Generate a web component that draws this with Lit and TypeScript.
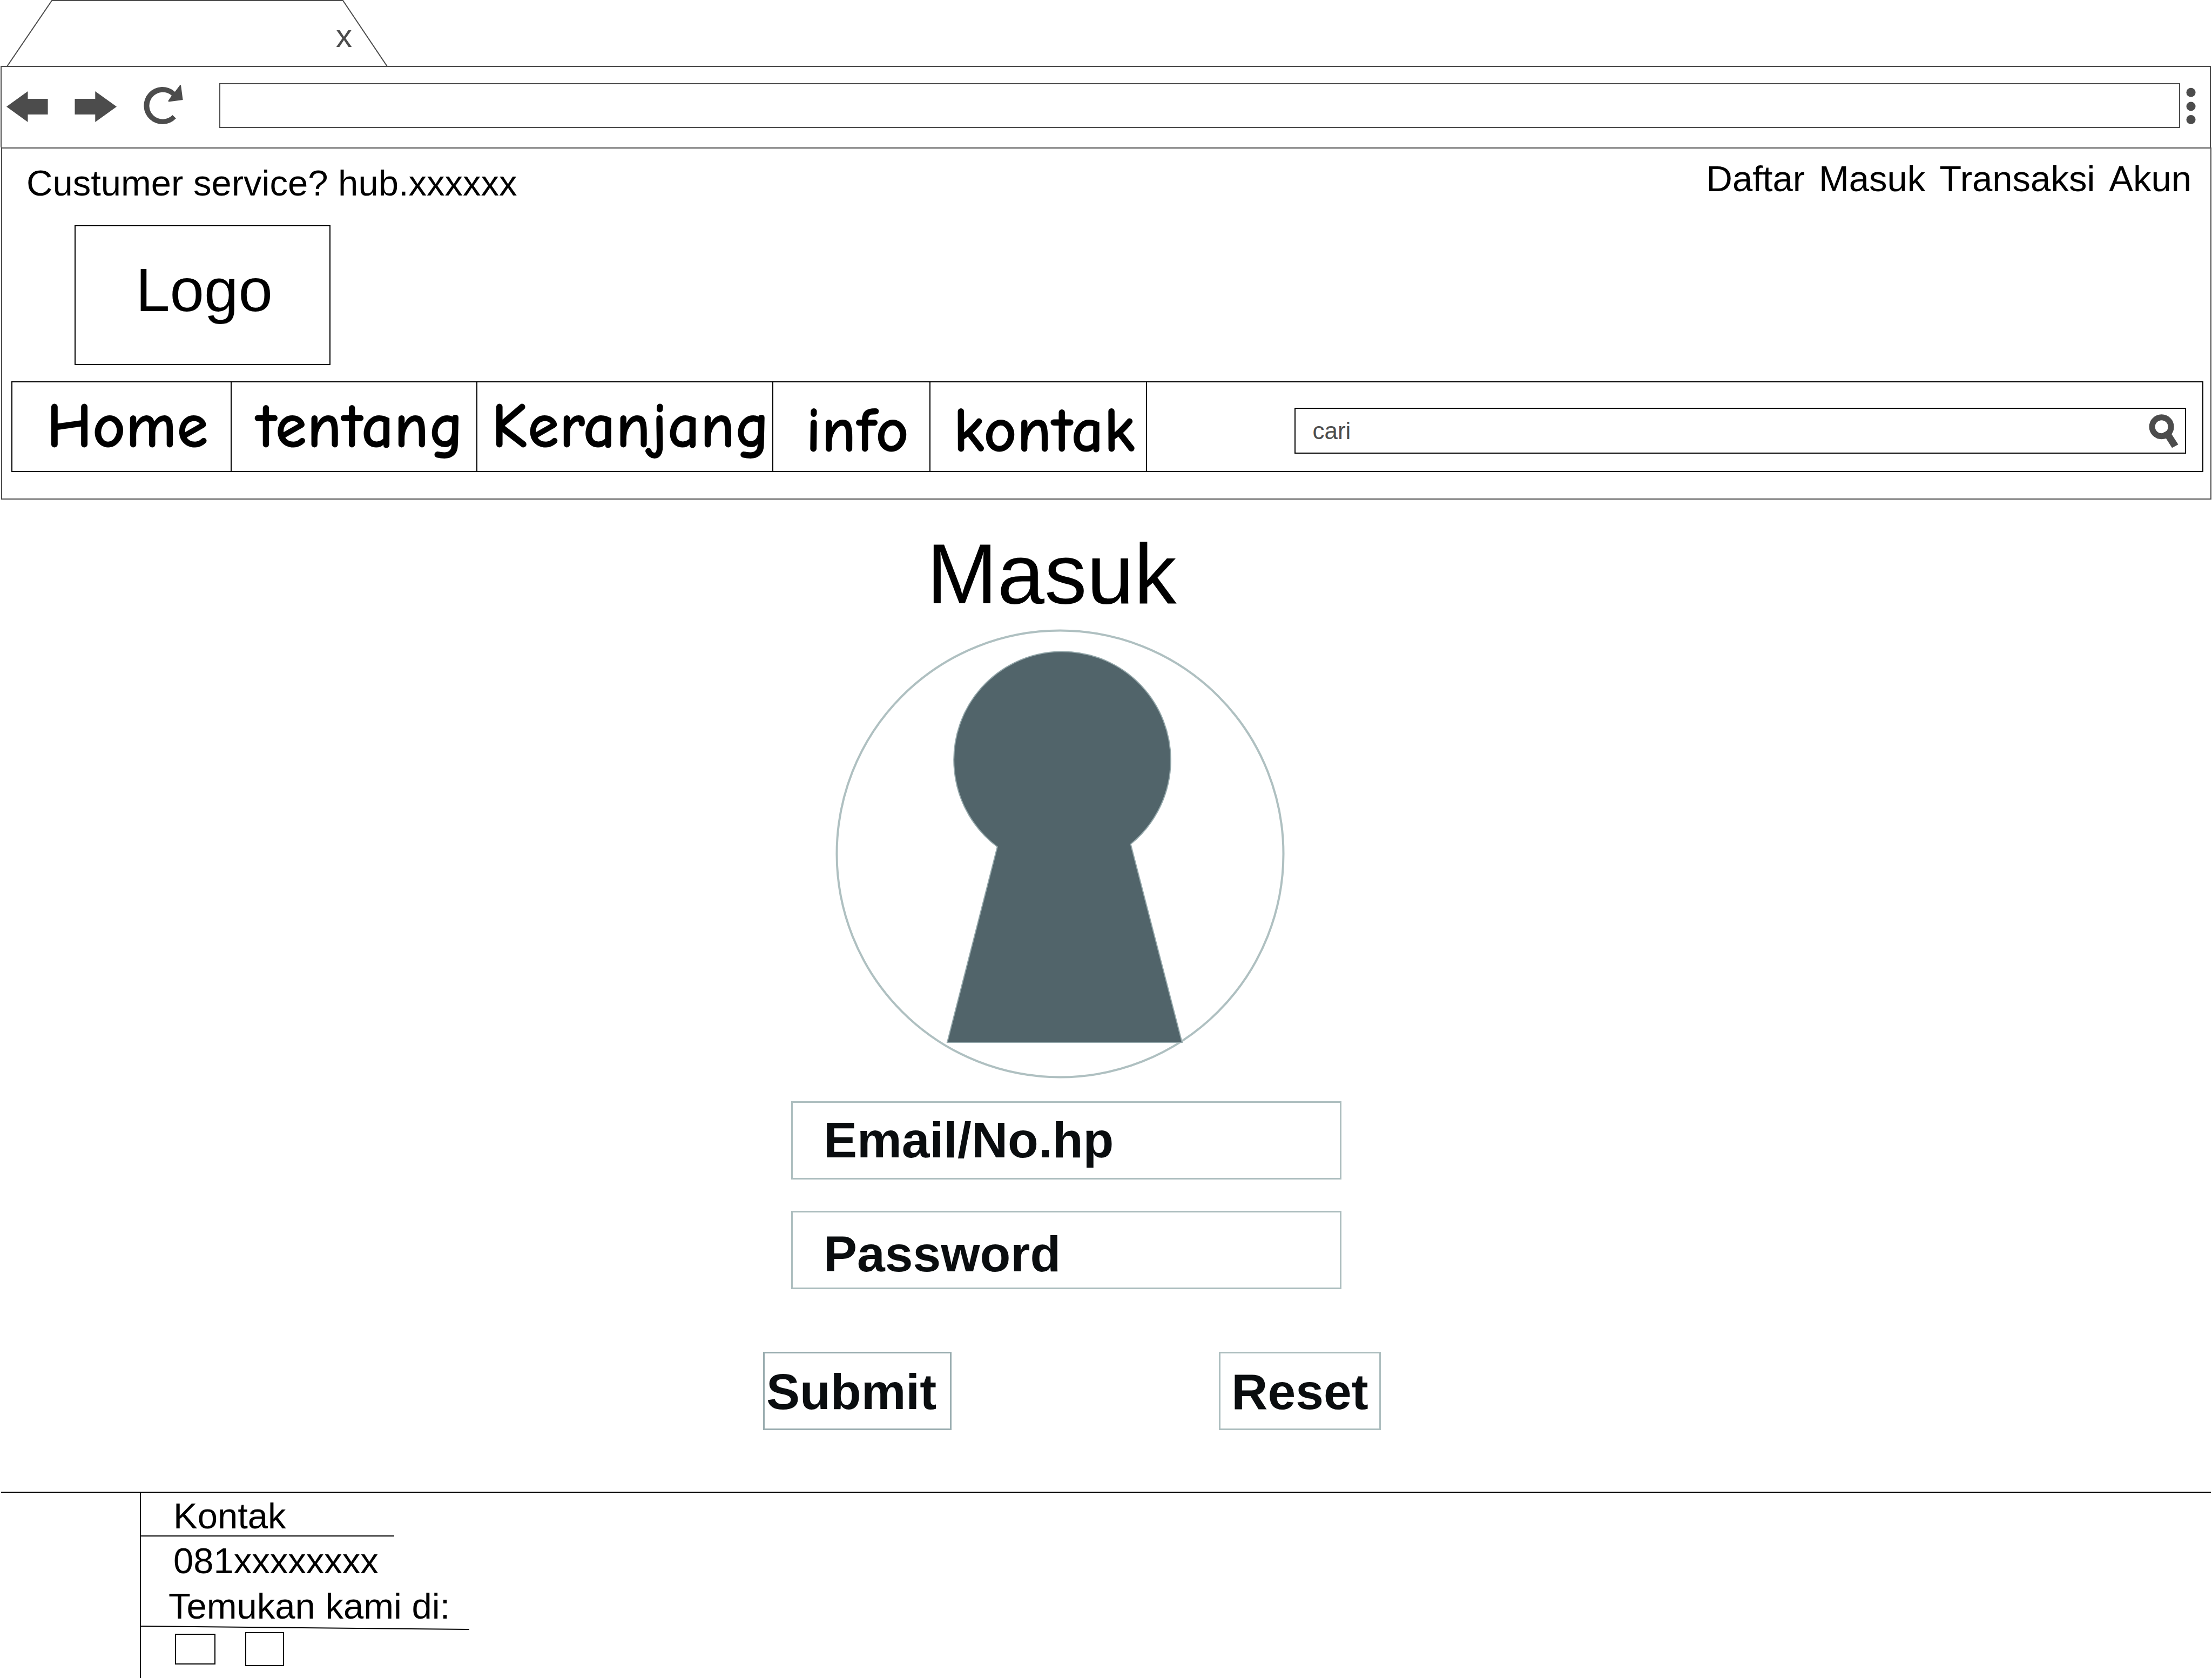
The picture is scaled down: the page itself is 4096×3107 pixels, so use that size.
import { LitElement, html, css, svg } from "lit";
import { customElement } from "lit/decorators.js";

const MENU = [
  { label: "Home", cls: "cell" },
  { label: "tentang", cls: "cell" },
  { label: "Keranjang", cls: "cell" },
  { label: "info", cls: "cell low" },
  { label: "kontak", cls: "cell low" },
];

const ACCOUNT = ["Daftar", "Masuk", "Transaksi", "Akun"];

@customElement("browser-chrome")
export class BrowserChrome extends LitElement {
  static styles = css`
    :host {
      display: block;
      color: #4c4c4c;
    }
    .tab {
      position: relative;
      display: block;
      width: 708px;
      height: 122px;
      margin-left: 11px;
    }
    .tab-shape {
      display: block;
    }
    .close {
      position: absolute;
      right: 67px;
      top: 35px;
      padding: 0;
      border: 0;
      background: none;
      color: inherit;
      font: 60px/64px "Liberation Sans", Arial, sans-serif;
    }
    .toolbar {
      display: flex;
      align-items: center;
      margin: 0 2px 0 1px;
      padding: 30px 26px 36px 9px;
      border: 2px solid #4c4c4c;
      border-bottom: 0;
    }
    .tool {
      display: block;
      flex: none;
      padding: 0;
      border: 0;
      background: none;
      color: inherit;
    }
    .tool svg {
      display: block;
      fill: currentColor;
    }
    .forward {
      margin-left: 49px;
    }
    .reload {
      margin-left: 50px;
    }
    .address {
      box-sizing: border-box;
      flex: 1;
      min-width: 0;
      height: 83px;
      margin: 0 11px 0 66px;
      padding: 0 24px;
      border: 2px solid #4c4c4c;
      border-radius: 0;
      background: #fff;
      font: 44px/60px "Liberation Sans", Arial, sans-serif;
    }
  `;

  render() {
    return html`
      <div class="tab">
        <svg class="tab-shape" width="708" height="122" viewBox="11 0 708 122">
          <path d="M13 123 L96 1 H635 L717 123" fill="none" stroke="#4c4c4c" stroke-width="2" />
        </svg>
        <button class="close" type="button">x</button>
      </div>
      <div class="toolbar">
        <button class="tool" type="button" aria-label="Back">
          <svg width="77" height="83" viewBox="12 154 77 83">
            <path d="M12 197.500 L51.500 169 V183 H88.600 V212 H51.500 V226 Z" />
          </svg>
        </button>
        <button class="tool forward" type="button" aria-label="Forward">
          <svg width="78" height="83" viewBox="138 154 78 83">
            <path d="M216 197.500 L176.300 169 V183 H138.500 V212 H176.300 V226 Z" />
          </svg>
        </button>
        <button class="tool reload" type="button" aria-label="Reload">
          <svg width="74" height="83" viewBox="266 154 74 83">
            <path
              d="M325.900 219.300 A34.500 34.500 0 1 1 323.900 169.900 L333.300 157.400 L335 157.400 L338.600 185 L312 188.600 L311.500 186.500 L318 177 A25 25 0 1 0 319.500 213 Z"
            />
          </svg>
        </button>
        <input class="address" type="text" aria-label="Address" />
        <button class="tool" type="button" aria-label="Menu">
          <svg width="18" height="83" viewBox="4048 154 18 83">
            <circle cx="4057" cy="171.300" r="8.500" />
            <circle cx="4057" cy="197" r="8.500" />
            <circle cx="4057" cy="221.500" r="8.500" />
          </svg>
        </button>
      </div>
    `;
  }
}

@customElement("site-header")
export class SiteHeader extends LitElement {
  static styles = css`
    :host {
      display: block;
      margin: 0 1px 0 2px;
      padding: 16px 13px 49px 17px;
      border: 2px solid #4c4c4c;
      font: 67px/80px "Liberation Sans", Arial, sans-serif;
    }
    a {
      color: inherit;
      text-decoration: none;
    }
    .topbar {
      display: flex;
      justify-content: space-between;
      align-items: flex-start;
    }
    .service {
      margin: 8px 0 0 28px;
    }
    .account {
      display: flex;
      gap: 26px;
      padding-right: 22px;
    }
    .logo {
      box-sizing: border-box;
      display: flex;
      align-items: center;
      justify-content: center;
      width: 474px;
      height: 259px;
      margin: 38px 0 0 117px;
      padding: 0 0 20px 6px;
      border: 2px solid #000;
      font-size: 114px;
      line-height: 130px;
    }
    .menu {
      display: grid;
      grid-template-columns: 406fr 456fr 548fr 291fr 402fr 1955fr;
      margin-top: 30px;
      border: 2px solid #000;
    }
    .cell {
      display: flex;
      justify-content: center;
      padding: 16px 0 16px 22px;
      border-right: 2px solid #000;
      font-family: "Comic Sans MS", "Comic Neue", cursive;
      font-weight: 700;
      font-size: 119px;
      line-height: 132px;
      white-space: nowrap;
    }
    .low {
      padding: 24px 0 8px 22px;
    }
    .find {
      display: flex;
      align-items: center;
      justify-content: flex-end;
      padding: 15px 30px 0 0;
    }
    .box {
      display: flex;
      align-items: center;
      width: 85.600%;
      border: 2px solid #000;
    }
    .query {
      flex: 1;
      min-width: 0;
      height: 81px;
      padding: 0 0 0 31px;
      border: 0;
      background: none;
      font: 44px/60px "Liberation Sans", Arial, sans-serif;
      appearance: none;
      outline: none;
    }
    .query::placeholder {
      color: #4c4c4c;
      opacity: 1;
    }
    .go {
      padding: 0 12px 0 0;
      border: 0;
      background: none;
    }
    .go svg {
      display: block;
    }
  `;

  render() {
    return html`
      <div class="topbar">
        <div class="service">Custumer service? hub.xxxxxx</div>
        <nav class="account">${ACCOUNT.map((t) => html`<a href="#">${t}</a>`)}</nav>
      </div>
      <div class="logo">Logo</div>
      <nav class="menu">
        ${MENU.map((m) => html`<a class=${m.cls} href="#">${m.label}</a>`)}
        <form class="find" role="search">
          <div class="box">
            <input class="query" type="search" placeholder="cari" aria-label="cari" />
            <button class="go" type="button" aria-label="cari">
              <svg width="56" height="81" viewBox="3978 758 56 81">
                <circle cx="4002.600" cy="791.300" r="17.500" fill="none" stroke="#4c4c4c" stroke-width="11" />
                <path d="M4002 804 L4012 799 L4021.300 805 L4033.500 824 L4022 830.300 L4011 813 Z" fill="#4c4c4c" />
              </svg>
            </button>
          </div>
        </form>
      </nav>
    `;
  }
}

const keyhole = svg`
  <circle cx="1963" cy="1581" r="413.500" fill="none" stroke="#afc0c1" stroke-width="4" />
  <path
    d="M1846.800 1568 A200.800 200.800 0 1 1 2093.700 1563 L2188.800 1930 H1754 Z"
    fill="#51646a" stroke="#93a6a9" stroke-width="2"
  />`;

@customElement("login-form")
export class LoginForm extends LitElement {
  static styles = css`
    :host {
      display: grid;
      grid-template-columns: 1413fr 1144px 1539fr;
      padding: 58px 0 114px;
      font-family: "Liberation Sans", Arial, sans-serif;
    }
    .login {
      grid-column: 2;
      display: flex;
      flex-direction: column;
    }
    .title {
      margin: 0 0 0 303px;
      font-weight: 400;
      font-size: 157px;
      line-height: 160px;
    }
    .keyhole {
      display: block;
      margin: 22px 0 42px 134px;
    }
    .field,
    .action {
      box-sizing: border-box;
      height: 145px;
      border: 3px solid #adbebf;
      border-radius: 0;
      background: #fff;
      color: #0a0d0f;
      font: bold 93px/108px "Liberation Sans", Arial, sans-serif;
    }
    .field {
      width: 1019px;
      margin-left: 52px;
      padding: 0 0 0 57px;
      outline: none;
    }
    .field::placeholder {
      color: #0a0d0f;
      opacity: 1;
    }
    .secret {
      margin-top: 58px;
      padding-top: 16px;
    }
    .actions {
      display: flex;
      justify-content: space-between;
      margin-top: 116px;
    }
    .action {
      width: 300px;
      padding: 2px 0 0;
    }
    .submit {
      width: 349px;
      padding-left: 3px;
      border-color: #9aadb0;
      text-align: left;
    }
  `;

  render() {
    return html`
      <form class="login">
        <h1 class="title">Masuk</h1>
        <svg class="keyhole" width="832" height="832" viewBox="1547 1165 832 832">${keyhole}</svg>
        <input class="field" type="text" placeholder="Email/No.hp" aria-label="Email/No.hp" />
        <input class="field secret" type="password" placeholder="Password" aria-label="Password" />
        <div class="actions">
          <button class="action submit" type="button">Submit</button>
          <button class="action" type="reset">Reset</button>
        </div>
      </form>
    `;
  }
}

@customElement("site-footer")
export class SiteFooter extends LitElement {
  static styles = css`
    :host {
      display: flex;
      margin: 0 2px;
      border-top: 2px solid #000;
      font: 67px/66px "Liberation Sans", Arial, sans-serif;
    }
    .column {
      margin-left: 257px;
      padding-bottom: 18px;
      border-left: 2px solid #000;
    }
    .heading {
      width: 409px;
      margin: 0;
      padding: 10px 0 3px 60px;
      border-bottom: 2px solid #000;
      font: inherit;
    }
    .phone {
      padding: 12px 0 0 60px;
    }
    .social {
      padding: 18px 0 0 51px;
    }
    .rule {
      display: block;
      margin-top: 2px;
    }
    .links {
      display: flex;
      align-items: center;
      gap: 55px;
      padding: 3px 0 0 63px;
    }
    .link {
      box-sizing: border-box;
      width: 75px;
      height: 57px;
      border: 2px solid #000;
    }
    .tall {
      width: 72px;
      height: 63px;
    }
  `;

  render() {
    return html`
      <div class="column">
        <h2 class="heading">Kontak</h2>
        <div class="phone">081xxxxxxxx</div>
        <div class="social">Temukan kami di:</div>
        <svg class="rule" width="608" height="10" viewBox="0 0 608 10">
          <path d="M0 2 L608 8" stroke="#000" stroke-width="2" />
        </svg>
        <div class="links">
          <a class="link" href="#"></a>
          <a class="link tall" href="#"></a>
        </div>
      </div>
    `;
  }
}

@customElement("app-root")
export class AppRoot extends LitElement {
  static styles = css`
    :host {
      display: flex;
      flex-direction: column;
      min-height: 100vh;
      background: #fff;
      color: #000;
    }
    .footer {
      flex: 1;
    }
  `;

  render() {
    return html`
      <browser-chrome></browser-chrome>
      <site-header></site-header>
      <login-form></login-form>
      <site-footer class="footer"></site-footer>
    `;
  }
}
